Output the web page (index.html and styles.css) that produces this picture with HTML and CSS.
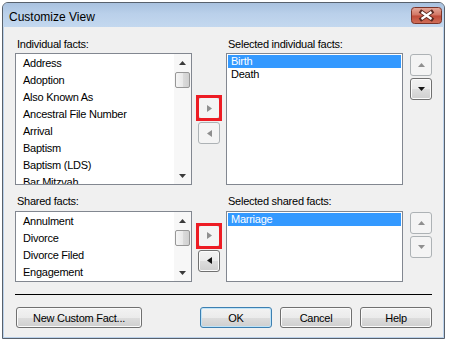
FILE: index.html
```html
<!DOCTYPE html>
<html lang="en">
<head>
  <meta charset="UTF-8">
  <title>Customize View</title>
  <link rel="stylesheet" href="styles.css">
</head>
<body>

  <div class="window">
    <div class="titlebar">
      <span class="title">Customize View</span>
      <span class="close">
        <svg width="31" height="17" viewBox="0 0 31 17">
          <defs>
            <linearGradient id="closeBg" x1="0" y1="0" x2="0" y2="1">
              <stop offset="0" stop-color="#e6aa9c"/>
              <stop offset="0.48" stop-color="#d27563"/>
              <stop offset="0.52" stop-color="#c04a38"/>
              <stop offset="1" stop-color="#d0705a"/>
            </linearGradient>
          </defs>
          <rect x="0.5" y="0.5" width="30" height="16" rx="3" fill="url(#closeBg)" stroke="#7a3328"/>
          <path d="M10.5 5 L20.5 12 M20.5 5 L10.5 12" stroke="#5c2a22" stroke-width="4" stroke-linecap="square"/>
          <path d="M10.5 5 L20.5 12 M20.5 5 L10.5 12" stroke="#ffffff" stroke-width="2.2"/>
        </svg>
      </span>
    </div>

    <div class="client">

      <div class="pane pane-top">
        <div class="cap">Individual facts:</div>
        <div></div>
        <div class="cap">Selected individual facts:</div>
        <div></div>

        <div class="list">
          <ul class="items facts">
            <li>Address</li>
            <li>Adoption</li>
            <li>Also Known As</li>
            <li>Ancestral File Number</li>
            <li>Arrival</li>
            <li>Baptism</li>
            <li>Baptism (LDS)</li>
            <li>Bar Mitzvah</li>
          </ul>
          <div class="sb">
            <div class="sb-arrow"><svg width="7" height="4" viewBox="0 0 7 4"><path d="M0 4L3.5 0 7 4z"/></svg></div>
            <div class="sb-track"><div class="sb-thumb"></div></div>
            <div class="sb-arrow"><svg width="7" height="4" viewBox="0 0 7 4"><path d="M0 0L7 0 3.5 4z"/></svg></div>
          </div>
        </div>

        <div class="move">
          <button class="tbtn off mark"><svg width="5" height="7" viewBox="0 0 5 7"><path d="M0 0L5 3.5 0 7z"/></svg></button>
          <button class="tbtn off"><svg width="5" height="7" viewBox="0 0 5 7"><path d="M5 0L0 3.5 5 7z"/></svg></button>
        </div>

        <div class="list">
          <ul class="items chosen">
            <li class="sel">Birth</li>
            <li>Death</li>
          </ul>
        </div>

        <div class="order">
          <button class="tbtn off"><svg width="7" height="4" viewBox="0 0 7 4"><path d="M0 4L3.5 0 7 4z"/></svg></button>
          <button class="tbtn"><svg width="7" height="4" viewBox="0 0 7 4"><path d="M0 0L7 0 3.5 4z"/></svg></button>
        </div>
      </div>

      <div class="pane pane-bottom">
        <div class="cap">Shared facts:</div>
        <div></div>
        <div class="cap">Selected shared facts:</div>
        <div></div>

        <div class="list">
          <ul class="items facts">
            <li>Annulment</li>
            <li>Divorce</li>
            <li>Divorce Filed</li>
            <li>Engagement</li>
          </ul>
          <div class="sb">
            <div class="sb-arrow"><svg width="7" height="4" viewBox="0 0 7 4"><path d="M0 4L3.5 0 7 4z"/></svg></div>
            <div class="sb-track"><div class="sb-thumb"></div></div>
            <div class="sb-arrow"><svg width="7" height="4" viewBox="0 0 7 4"><path d="M0 0L7 0 3.5 4z"/></svg></div>
          </div>
        </div>

        <div class="move">
          <button class="tbtn off mark"><svg width="5" height="7" viewBox="0 0 5 7"><path d="M0 0L5 3.5 0 7z"/></svg></button>
          <button class="tbtn"><svg width="5" height="7" viewBox="0 0 5 7"><path d="M5 0L0 3.5 5 7z"/></svg></button>
        </div>

        <div class="list">
          <ul class="items chosen">
            <li class="sel">Marriage</li>
          </ul>
        </div>

        <div class="order">
          <button class="tbtn off"><svg width="7" height="4" viewBox="0 0 7 4"><path d="M0 4L3.5 0 7 4z"/></svg></button>
          <button class="tbtn off"><svg width="7" height="4" viewBox="0 0 7 4"><path d="M0 0L7 0 3.5 4z"/></svg></button>
        </div>
      </div>

      <div class="rule"></div>

      <div class="actions">
        <button class="btn wide">New Custom Fact...</button>
        <button class="btn default">OK</button>
        <button class="btn">Cancel</button>
        <button class="btn">Help</button>
      </div>

    </div>
  </div>

</body>
</html>
```

FILE: styles.css
```css
body {
  margin: 0;
  background: #fff;
  font-family: "Liberation Sans", Arial, sans-serif;
  font-size: 11px;
  letter-spacing: -0.25px;
  color: #000;
}
.window {
  box-sizing: border-box;
  width: 443px;
  height: 337px;
  margin: 2px 0 0 2px;
  border: 1px solid #58616c;
  border-radius: 6px 6px 0 0;
  background: #bcd2eb;
  display: flex;
  flex-direction: column;
  overflow: hidden;
}
.titlebar {
  height: 24px;
  flex: none;
  display: flex;
  justify-content: space-between;
  padding: 0 2px 0 6px;
  background: linear-gradient(#a9c2df, #bad0ea 45%, #c3d8ef);
}
.title {
  font-size: 12px;
  line-height: 14px;
  letter-spacing: 0;
  padding-top: 7px;
}
.close {
  margin-top: 4px;
  height: 17px;
}
.client {
  flex: 1;
  margin: 0 1px 1px;
  background: #f0f0f0;
  padding: 11px 11px 0;
}
.pane {
  display: grid;
  grid-template-columns: 177px 34px 177px 29px;
}
.pane-top {
  grid-template-rows: 13px 132px;
  row-gap: 2px;
}
.pane-bottom {
  grid-template-rows: 13px 71px;
  row-gap: 3px;
  margin-top: 10px;
}
.cap {
  line-height: 13px;
  padding-left: 2px;
  white-space: nowrap;
}
.list {
  box-sizing: border-box;
  border: 1px solid #828790;
  background: #fff;
  display: flex;
  overflow: hidden;
}
.items {
  list-style: none;
  margin: 0;
  padding: 1px;
  flex: 1;
  overflow: hidden;
}
.items li {
  white-space: nowrap;
}
.facts li {
  height: 17px;
  line-height: 17px;
  padding-left: 6px;
}
.chosen li {
  height: 13px;
  line-height: 13px;
  padding-left: 3px;
}
.sel {
  background: #3399ff;
  color: #fff;
}
.sb {
  width: 17px;
  flex: none;
  display: flex;
  flex-direction: column;
  background: #f7f7f7;
}
.sb-arrow {
  height: 17px;
  display: flex;
  align-items: center;
  justify-content: center;
  fill: #3a3a3a;
}
.sb-track {
  flex: 1;
}
.sb-thumb {
  box-sizing: border-box;
  height: 16px;
  margin: 1px 1px 0;
  border: 1px solid #979797;
  border-radius: 2px;
  background: linear-gradient(to right, #f5f5f5, #eaeaea 50%, #dcdcdc 51%, #d0d0d0);
}
.move {
  display: flex;
  flex-direction: column;
  align-items: center;
  justify-content: center;
  gap: 3px;
  padding-top: 3px;
}
.order {
  display: flex;
  flex-direction: column;
  align-items: flex-end;
  gap: 2px;
  padding-top: 1px;
}
.tbtn, .btn {
  box-sizing: border-box;
  padding: 0;
  font: inherit;
  letter-spacing: inherit;
  color: #000;
  border: 1px solid #707070;
  border-radius: 3px;
  background: linear-gradient(#f2f2f2, #ebebeb 50%, #dddddd 51%, #cfcfcf);
  box-shadow: inset 0 0 0 1px #fbfbfb;
}
.tbtn {
  width: 22px;
  height: 22px;
  display: flex;
  align-items: center;
  justify-content: center;
  fill: #151515;
  overflow: visible;
}
.tbtn.off {
  border-color: #adb2b5;
  background: #f4f4f4;
  box-shadow: none;
  fill: #8f8f8f;
}
.mark {
  position: relative;
}
.mark::after {
  content: "";
  position: absolute;
  left: -3px;
  top: -3px;
  right: -3px;
  bottom: -3px;
  border: 3px solid #ed1c24;
}
.rule {
  height: 1px;
  margin-top: 12px;
  background: #000;
}
.actions {
  display: flex;
  gap: 8px;
  margin-top: 12px;
}
.btn {
  width: 72px;
  height: 21px;
}
.btn.wide {
  width: 126px;
  margin-left: 1px;
  margin-right: auto;
}
.btn.default {
  border-color: #3c7fb1;
  box-shadow: inset 0 0 0 1px #bfe3f7;
}
```
